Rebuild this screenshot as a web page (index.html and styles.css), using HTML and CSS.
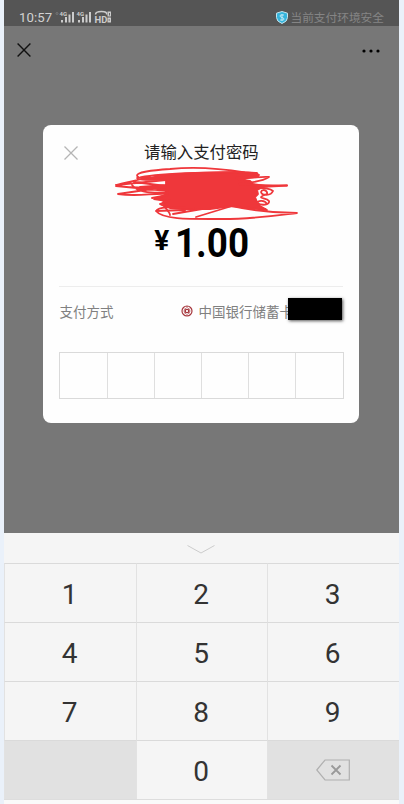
FILE: index.html
```html
<!DOCTYPE html>
<html lang="zh-CN">

<head>
    <meta charset="UTF-8">
    <meta name="viewport" content="width=device-width, initial-scale=1.0">
    <title>请输入支付密码</title>
    <link rel="stylesheet" href="styles.css">
</head>

<body>
    <div class="phone">
        <div class="status-bar">
            <span class="clock">10:57</span>
            <svg class="signals" width="57" height="16" viewBox="0 0 57 16">
                <circle cx="2" cy="4.500" r="1" fill="none" stroke="#777" />
                <g id="signal">
                    <text x="4.500" y="7" class="tiny">4G</text>
                    <path d="M7 11v2.500M11 8v5.500M14.500 5.500v8M18 3v10.500" class="bars" />
                </g>
                <use href="#signal" x="17" />
                <text x="39.500" y="13.500" class="hd">HD</text>
                <path d="M40.500 5.500q0-3 6-3t5 3" class="bars thin" />
                <path d="M52.500 2.500h3.500v5h-3.500zM52.500 8.500h3.500v5h-3.500z" fill="#ccc" />
                <path d="M54.500 4v2.500M53.500 11h1.500" stroke="#666" />
            </svg>
            <div class="safe">
                <svg width="12" height="13" viewBox="0 0 12 13">
                    <path d="M6 .5l5.500 1.700v4.300q0 4-5.500 6q-5.500-2-5.500-6V2.200z" fill="#35b4dc" stroke="#c4e4ed" />
                    <path d="M8 4H5q-1 0-1 1t2 1.500t2 1.500t-1 1H4M6 3v7" class="shield-mark" />
                </svg>
                <span>当前支付环境安全</span>
            </div>
        </div>

        <div class="nav">
            <svg width="14" height="14" viewBox="0 0 14 14">
                <path d="M.6 .6l12.800 12.800M13.400 .6L.6 13.400" class="close-dark" />
            </svg>
            <svg width="18" height="4" viewBox="0 0 18 4">
                <circle cx="2" cy="2" r="1.600" />
                <circle cx="9" cy="2" r="1.600" />
                <circle cx="16" cy="2" r="1.600" />
            </svg>
        </div>

        <div class="card">
            <div class="card-head">
                <svg class="card-close" width="14" height="14" viewBox="0 0 14 14">
                    <path d="M.5 .5l13 13M13.500 .5l-13 13" />
                </svg>
                <h1>请输入支付密码</h1>
            </div>
            <svg class="scribble" width="195" height="60" viewBox="0 0 195 60">
                <path class="fill" d="M56 12L88 10L125 9L147 10L148 14L128 16L140 18L143 21L155 23L147 27L148 31L145 34L147 39L150 43L157 47L122 43L100 46L72 46L60 45L53 41L57 38L44 36L55 32L56 27L30 24L56 22L56 17L34 16z" />
                <path d="M28 14C22 9 46 7 60 6C80 4 108 5 135 9.500C142 10 148 11 149 12C148 14 136 13 126 15C139 16 151 13 159 14C153 18 140 20 129 21C148 23 164 22 177 22.500" />
                <path d="M177 22.500C160 24 148 23 141 25C148 25 158 24 163 28C161 33 152 33 151 29C152 26 158 27 157 31C144 36 156 34 159 38C160 42 152 43 147 40C148 37 155 37 157 41" />
                <path d="M28 15C42 11 100 8 145 10M28 14C24 17 34 17 56 17M6 22C18 19 24 18 40 14M6 22L56 17M6 22C15 25 40 25 56 23M24 19L56 23M6 23L58 28M22 22C30 32 48 29 56 30M8 31L56 24M8 31C28 34 42 30 58 31" />
                <path d="M42 35L58 32M50 41L60 37M50 41C55 44 60 44 66 45M46 48C50 42 70 45 84 45M46 48C53 57 82 56 112 56C145 56 170 52 187 50C160 50 140 47 122 43M46 48L75 47M86 54L122 43M63 51L92 46" />
                <path d="M54 38C50 42 60 48 60 52" />
            </svg>
            <div class="amount"><span class="yen">¥</span><span class="num">1.00</span></div>
            <div class="method">
                <span>支付方式</span>
                <div class="bank">
                    <svg width="12" height="12" viewBox="0 0 12 12">
                        <circle cx="6" cy="6" r="5" />
                        <rect x="4.500" y="4.500" width="3" height="3" rx=".5" />
                        <path d="M6 1v2.500M6 8.500v2.500M4.500 3q-3 3 0 6M7.500 3q3 3 0 6" class="fine" />
                    </svg>
                    <span>中国银行储蓄卡</span>
                    <span class="mask"></span>
                </div>
            </div>
            <div class="password">
                <i></i><i></i><i></i><i></i><i></i><i></i>
            </div>
        </div>

        <div class="keyboard">
            <div class="fold">
                <svg width="28" height="9" viewBox="0 0 28 9">
                    <path d="M.5 .5L14 8L27.500 .5" />
                </svg>
            </div>
            <div class="keys">
                <span>1</span><span>2</span><span>3</span>
                <span>4</span><span>5</span><span>6</span>
                <span>7</span><span>8</span><span>9</span>
                <span class="gray"></span><span>0</span>
                <span class="gray">
                    <svg width="34" height="22" viewBox="0 0 34 22">
                        <path d="M.8 11L9 1H33.300V21H9z" class="outline" />
                        <path d="M15.500 6.500l9 9M24.500 6.500l-9 9" class="cross" />
                    </svg>
                </span>
            </div>
        </div>
    </div>
</body>

</html>
```
FILE: styles.css
```css
body {
    margin: 0;
    background: #eaf1fa;
    font-family: Roboto, "Noto Sans CJK SC", sans-serif;
}

svg {
    display: block;
    flex: none;
}

.phone {
    width: 395px;
    height: 804px;
    margin-left: 4px;
    background: #777;
    display: flex;
    flex-direction: column;
    overflow: hidden;
}

.status-bar {
    height: 26px;
    flex: none;
    box-sizing: border-box;
    padding: 9px 15px 0;
    background: #555;
    display: flex;
    align-items: center;
    color: #d2d2d2;
}

.clock {
    width: 36px;
    font-size: 13.2px;
    line-height: 16px;
    letter-spacing: 0.1px;
}

.signals {
    margin-top: -2px;
    fill: #ccc;
}

.tiny {
    font-size: 6px;
    font-weight: bold;
}

.hd {
    font-size: 9.5px;
    font-weight: bold;
}

.bars {
    fill: none;
    stroke: #ccc;
    stroke-width: 2;
}

.thin {
    stroke-width: 1.5;
}

.safe {
    margin-left: auto;
    display: flex;
    align-items: center;
    gap: 2px;
    font-size: 11.7px;
    line-height: 16px;
    color: #858585;
}

.shield-mark {
    fill: none;
    stroke: #d8f3fa;
    stroke-width: 0.8;
}

.nav {
    height: 99px;
    flex: none;
    box-sizing: border-box;
    padding: 17px 19px 0 13px;
    display: flex;
    justify-content: space-between;
}

.nav svg:last-child {
    margin-top: 6px;
}

.close-dark {
    stroke: #111;
    stroke-width: 1.4;
}

.card {
    width: 316px;
    height: 298px;
    flex: none;
    box-sizing: border-box;
    margin-left: 39.4px;
    padding: 0 16px;
    background: #fefefe;
    border-radius: 8px;
    position: relative;
}

.card-head {
    height: 56px;
    display: flex;
    align-items: center;
    justify-content: center;
}

.card-close {
    position: absolute;
    left: 21px;
    top: 21px;
    stroke: #b5b5b5;
    stroke-width: 1.3;
}

h1 {
    margin: 0;
    font-size: 16.4px;
    font-weight: normal;
    line-height: 24px;
    color: #222;
}

.scribble {
    position: absolute;
    left: 66.5px;
    top: 38px;
    fill: none;
    stroke: #ef373b;
    stroke-width: 1.8;
    stroke-linejoin: round;
    stroke-linecap: round;
}

.scribble .fill {
    fill: #ef373b;
}

.amount {
    height: 105px;
    padding-top: 39px;
    box-sizing: border-box;
    display: flex;
    justify-content: center;
    align-items: flex-start;
    gap: 5px;
    font-size: 40px;
    line-height: 47px;
    font-weight: bold;
    color: #000;
}

.yen {
    margin-left: 7px;
    font-size: 28px;
    line-height: 41px;
}

.num {
    transform: scaleX(0.92);
    transform-origin: left;
    margin-left: 1px;
}

.method {
    height: 66px;
    padding-top: 15px;
    box-sizing: border-box;
    display: flex;
    justify-content: space-between;
    border-top: 1px solid #ededed;
    font-size: 13.5px;
    line-height: 20px;
    color: #808080;
}

.bank {
    width: 162px;
    height: 20px;
    display: flex;
    align-items: center;
    gap: 5px;
    position: relative;
    white-space: nowrap;
}

.bank svg {
    margin-top: -3px;
    fill: none;
    stroke: #a6373d;
    stroke-width: 1.2;
}

.bank .fine {
    stroke-width: 0.8;
}

.mask {
    position: absolute;
    left: 106.6px;
    top: -4px;
    width: 54px;
    height: 22px;
    background: #000;
    box-shadow: 1px 1px 3px #555;
}

.password {
    height: 47px;
    width: 285px;
    box-sizing: border-box;
    border: 1px solid #dadada;
    display: grid;
    grid-template-columns: repeat(6, 1fr);
}

.password i:not(:last-child) {
    border-right: 1px solid #dfdfdf;
}

.keyboard {
    flex: 1;
    margin-top: 110px;
    background: #fafafa;
}

.fold {
    height: 30px;
    box-sizing: border-box;
    padding: 12px 2px 0 0;
    background: #f5f5f5;
    display: flex;
    justify-content: center;
}

.fold svg {
    fill: none;
    stroke: #ccc;
}

.keys {
    display: grid;
    grid-template-columns: 132px 131px 132px;
    grid-auto-rows: 59px;
    border-bottom: 1px solid #ddd;
}

.keys span {
    box-sizing: border-box;
    border-top: 1px solid #dadada;
    border-left: 1px solid #e2e2e2;
    background: #f5f5f5;
    display: flex;
    align-items: center;
    justify-content: center;
    padding: 3px 2px 0 0;
    font-size: 28px;
    color: #333;
}

.keys .gray {
    background: #e1e1e1;
    padding-top: 0;
}

.outline {
    fill: none;
    stroke: #b0b0b0;
    stroke-width: 1.2;
}

.cross {
    stroke: #999;
    stroke-width: 1.8;
}
```
